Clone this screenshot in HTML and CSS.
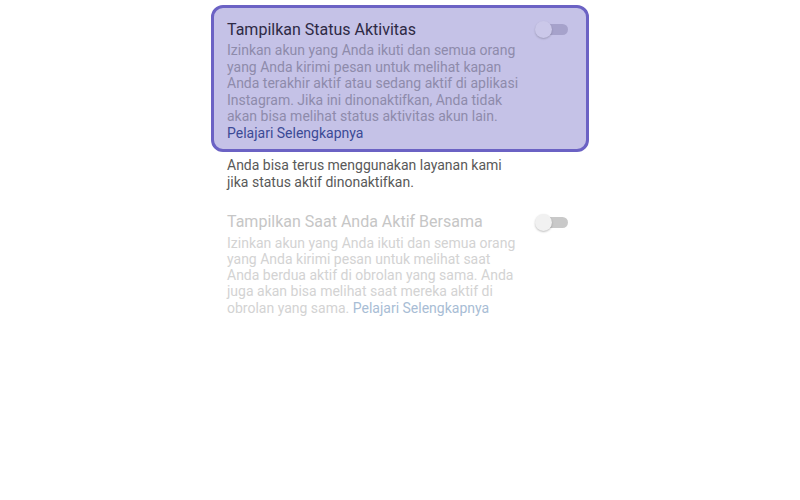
FILE: index.html
```html
<!DOCTYPE html>
<html lang="id">
<head>
  <meta charset="UTF-8" />
  <title>Status Aktivitas</title>
  <meta name="viewport" content="width=device-width, initial-scale=1" />
  <link rel="stylesheet" href="styles.css">
</head>
<body>
  <div class="container">
    <div class="setting highlight">
      <div class="setting-text">
        <div class="title">Tampilkan Status Aktivitas</div>
        <p class="desc">Izinkan akun yang Anda ikuti dan semua orang yang Anda kirimi pesan untuk melihat kapan Anda terakhir aktif atau sedang aktif di aplikasi Instagram. Jika ini dinonaktifkan, Anda tidak akan bisa melihat status aktivitas akun lain.</p>
        <a class="link" href="#">Pelajari Selengkapnya</a>
      </div>
      <div class="toggle"><span class="knob"></span></div>
    </div>

    <p class="note">Anda bisa terus menggunakan layanan kami jika status aktif dinonaktifkan.</p>

    <div class="setting disabled">
      <div class="setting-text">
        <div class="title">Tampilkan Saat Anda Aktif Bersama</div>
        <p class="desc">Izinkan akun yang Anda ikuti dan semua orang yang Anda kirimi pesan untuk melihat saat Anda berdua aktif di obrolan yang sama. Anda juga akan bisa melihat saat mereka aktif di obrolan yang sama. <a class="link" href="#">Pelajari Selengkapnya</a></p>
      </div>
      <div class="toggle"><span class="knob"></span></div>
    </div>
  </div>
</body>
</html>
```

FILE: styles.css
```css
* {
  box-sizing: border-box;
}
body {
  margin: 0;
  font-family: Roboto, 'Noto Sans', sans-serif;
  background: #ffffff;
}
.container {
  width: 378px;
  margin: 5px auto 0;
}
.setting {
  display: flex;
  justify-content: space-between;
  align-items: flex-start;
  padding: 21px 21px 9px 16px;
}
.setting-text {
  width: 296px;
}
.title {
  font-size: 16px;
  line-height: 20px;
  margin-bottom: 2px;
}
.desc {
  margin: 0;
  font-size: 14px;
  line-height: 16.5px;
}
.link {
  display: block;
  font-size: 14px;
  line-height: 17px;
  text-decoration: none;
}
.highlight {
  background: #c5c2e7;
  border: 3px solid #6b62c4;
  border-radius: 12px;
  padding: 12px 18px 7px 13px;
}
.highlight .title {
  color: #2e2a45;
}
.highlight .desc {
  color: #8e8bab;
}
.highlight .link {
  color: #3b4a96;
}
.note {
  margin: 5px 0 0;
  padding: 0 16px;
  width: 330px;
  font-size: 14px;
  line-height: 17px;
  color: #595959;
}
.disabled .title {
  color: #c6c6c6;
  margin-bottom: 3px;
}
.disabled .desc {
  color: #d3d3d3;
  line-height: 16.3px;
}
.disabled .link {
  display: inline;
  color: #a8bdd5;
}
.toggle {
  position: relative;
  width: 28px;
  height: 11px;
  margin-top: 4px;
  border-radius: 6px;
  background: #a6a2cb;
}
.knob {
  position: absolute;
  left: -5px;
  top: -3px;
  width: 17px;
  height: 17px;
  border-radius: 50%;
  background: #cbc8e9;
  box-shadow: 0 1px 2px rgba(0, 0, 0, 0.2);
}
.disabled .toggle {
  margin-top: 5px;
  background: #c9c9c9;
}
.disabled .knob {
  background: #f1f1f1;
  box-shadow: 0 1px 2px rgba(0, 0, 0, 0.25);
}
```
